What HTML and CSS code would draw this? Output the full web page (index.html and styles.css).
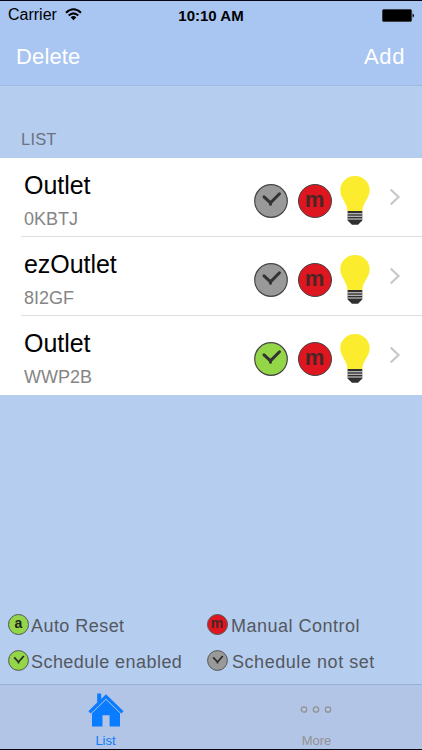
FILE: index.html
```html
<!DOCTYPE html>
<html lang="en">

<head>
    <meta charset="UTF-8">
    <meta name="viewport" content="width=device-width, initial-scale=1.0">
    <title>Outlets</title>
    <link rel="stylesheet" href="styles.css">
</head>

<body>
    <svg class="defs" width="0" height="0">
        <symbol id="clock" viewBox="0 0 34 34">
            <circle cx="17" cy="17" r="16.3" stroke="#444" stroke-width="1.2" />
            <path d="M10 12.800L16.500 18.900L25.500 9.800M16.500 18v2.200" fill="none" stroke="#333" stroke-width="3" stroke-linecap="round" />
        </symbol>
        <symbol id="clock-small" viewBox="0 0 21 21">
            <circle cx="10.500" cy="10.500" r="9.900" stroke="#555" />
            <path d="M6.200 7.300L10.500 12L15.800 6M10.500 11.500v2" fill="none" stroke="#2c2c2c" stroke-width="1.800" />
        </symbol>
        <symbol id="bulb" viewBox="0 0 30 49">
            <path d="M15 0C6.500 0 .3 6.300.3 14.200C.3 22.500 7.300 26.500 7.500 35.200H22.300C22.500 26.500 29.700 22.500 29.700 14.200C29.700 6.300 23.500 0 15 0Z" fill="#fbed2d" />
            <path d="M7.600 35h14.700v9.500l-4.300 4.200h-6l-4.400-4.200z" fill="#303030" />
            <path d="M7.600 37.700h14.700M7.600 40.300h14.700M7.600 43h14.700" stroke="#ddd" stroke-width="1.100" />
        </symbol>
        <symbol id="chevron" viewBox="0 0 12 18">
            <path d="M1.700 1.500L9.500 9L1.700 16.500" fill="none" stroke="#c7c7cc" stroke-width="2.200" />
        </symbol>
    </svg>

    <header class="top">
        <div class="status">
            <span class="carrier">Carrier
                <svg width="17" height="13" viewBox="0 0 17 13">
                    <path d="M1 4.700Q8.500-2.200 16 4.700M3.700 7.600Q8.500 3.200 13.300 7.600" fill="none" stroke="#000" stroke-width="2" />
                    <path d="M5.700 9.200Q8.500 7 11.300 9.200L8.500 12.200Z" />
                </svg>
            </span>
            <span class="time">10:10 AM</span>
            <svg class="battery" width="33" height="13" viewBox="0 0 33 13">
                <rect x=".4" y=".4" width="29.200" height="12.200" rx="1.500" stroke="#333" stroke-width=".8" />
                <path d="M30.600 4.200Q33.400 6.500 30.600 8.800Z" />
            </svg>
        </div>
        <nav class="nav">
            <span>Delete</span>
            <span class="add">Add</span>
        </nav>
    </header>

    <main class="content">
        <h2 class="section-title">LIST</h2>
        <ul class="outlets">
            <li class="outlet">
                <div class="info">
                    <div class="name">Outlet</div>
                    <div class="code">0KBTJ</div>
                </div>
                <svg class="badge off"><use href="#clock" /></svg>
                <span class="badge manual">m</span>
                <svg class="bulb"><use href="#bulb" /></svg>
                <svg class="chevron"><use href="#chevron" /></svg>
            </li>
            <li class="outlet">
                <div class="info">
                    <div class="name">ezOutlet</div>
                    <div class="code">8I2GF</div>
                </div>
                <svg class="badge off"><use href="#clock" /></svg>
                <span class="badge manual">m</span>
                <svg class="bulb"><use href="#bulb" /></svg>
                <svg class="chevron"><use href="#chevron" /></svg>
            </li>
            <li class="outlet">
                <div class="info">
                    <div class="name">Outlet</div>
                    <div class="code">WWP2B</div>
                </div>
                <svg class="badge on"><use href="#clock" /></svg>
                <span class="badge manual">m</span>
                <svg class="bulb"><use href="#bulb" /></svg>
                <svg class="chevron"><use href="#chevron" /></svg>
            </li>
        </ul>

        <div class="legend">
            <div class="legend-item"><span class="icon auto">a</span><span>Auto Reset</span></div>
            <div class="legend-item wide"><span class="icon manual">m</span><span>Manual Control</span></div>
            <div class="legend-item"><svg class="icon on"><use href="#clock-small" /></svg><span>Schedule enabled</span></div>
            <div class="legend-item wider"><svg class="icon off"><use href="#clock-small" /></svg><span>Schedule not set</span></div>
        </div>
    </main>

    <footer class="tabs">
        <div class="tab active">
            <svg width="36" height="34" viewBox="0 0 36 34">
                <path d="M9.200 9.500V.6h4V6L18 1.200L35.500 18.200L33.300 20.500L18 5.700L2.700 20.500L.4 18.200Z" />
                <path d="M18 6.700L32 20.300V33.500H21.600V22.200H14.500V33.500H4V20.300Z" />
            </svg>
            <span>List</span>
        </div>
        <div class="tab">
            <svg width="36" height="34" viewBox="0 0 36 34">
                <g fill="none" stroke="#929292" stroke-width="1.300">
                    <circle cx="5" cy="16.500" r="2.700" />
                    <circle cx="17" cy="16.500" r="2.700" />
                    <circle cx="29" cy="16.500" r="2.700" />
                </g>
            </svg>
            <span>More</span>
        </div>
    </footer>
</body>

</html>
```
FILE: styles.css
```css
* {
    box-sizing: border-box;
}

body {
    margin: 0;
    height: 750px;
    display: flex;
    flex-direction: column;
    font-family: "Liberation Sans", Arial, sans-serif;
    background: #b5cdef;
    border-top: 1px solid #05060f;
    border-bottom: 1px solid #05060f;
    overflow: hidden;
}

svg {
    display: block;
    flex: none;
}

.defs {
    position: absolute;
}

.top {
    height: 85px;
    background: #a9c5f1;
    border-bottom: 1px solid #9fb9e0;
}

.status {
    display: grid;
    grid-template-columns: 1fr auto 1fr;
    align-items: center;
    height: 28px;
    padding: 0 8px;
}

.carrier {
    display: flex;
    align-items: center;
    gap: 8px;
    font-size: 16px;
}

.carrier svg {
    margin-top: -2px;
}

.time {
    font-size: 15px;
    font-weight: bold;
}

.battery {
    justify-self: end;
    margin-right: -1px;
}

.nav {
    display: flex;
    justify-content: space-between;
    padding: 0 17px 0 16px;
    line-height: 56px;
    font-size: 22px;
    letter-spacing: .15px;
    color: #fff;
}

.add {
    letter-spacing: .6px;
}

.content {
    flex: 1;
    display: flex;
    flex-direction: column;
}

.section-title {
    margin: 0;
    padding: 43px 0 0 21px;
    height: 72px;
    font-size: 16.5px;
    font-weight: normal;
    line-height: 20px;
    letter-spacing: .2px;
    color: #6b737f;
}

.outlets {
    margin: 0;
    padding: 0;
    list-style: none;
    background: #fff;
}

.outlet {
    display: flex;
    height: 79px;
    margin-left: 21px;
    padding: 0 21px 0 2px;
    border-bottom: 1px solid #dedee0;
}

.outlet:last-child {
    border-bottom: none;
}

.info {
    flex: 1;
    padding-top: 13px;
}

.name {
    padding-left: 1px;
    font-size: 25px;
    line-height: 28px;
    letter-spacing: -.05px;
}

.code {
    margin-top: 10px;
    padding-left: 1px;
    font-size: 18px;
    line-height: 20px;
    color: #858585;
}

.badge {
    width: 34px;
    height: 34px;
    margin: 26px 10px 0 0;
}

.manual {
    background: #de1620;
    border: 1px solid #444;
    border-radius: 50%;
    color: #4a2526;
    font-size: 22px;
    font-weight: bold;
    line-height: 30px;
    text-align: center;
    text-indent: -1px;
}

.off {
    fill: #999;
}

.on {
    fill: #93d648;
}

.bulb {
    width: 30px;
    height: 49px;
    margin: 18px 19px 0 -2px;
}

.chevron {
    width: 12px;
    height: 18px;
    margin-top: 30px;
}

.legend {
    display: grid;
    grid-template-columns: 199px 1fr;
    row-gap: 14px;
    margin-top: auto;
    padding: 0 0 12px 8px;
}

.legend-item {
    display: flex;
    gap: 2px;
    height: 22px;
    font-size: 18px;
    line-height: 24px;
    letter-spacing: .45px;
    color: #54585f;
}

.legend-item.wide {
    gap: 3px;
    letter-spacing: .5px;
}

.legend-item.wider {
    gap: 4px;
    letter-spacing: .55px;
}

.icon {
    width: 21px;
    height: 21px;
    flex: none;
    letter-spacing: 0;
}

span.icon {
    border: 1px solid #555;
    border-radius: 50%;
    font-size: 14px;
    font-weight: bold;
    line-height: 17px;
    text-align: center;
}

.auto {
    background: #93d648;
    color: #222;
}

.icon.manual {
    color: #4a2526;
}

.tabs {
    display: flex;
    height: 65px;
    background: #b2c5e6;
    border-top: 1px solid #9cafd2;
}

.tab {
    flex: 1;
    display: flex;
    flex-direction: column;
    align-items: center;
    padding-top: 8px;
    font-size: 13px;
    line-height: 16px;
    color: #929292;
}

.tab span {
    margin-top: 6px;
}

.tab.active {
    color: #0a7cff;
    fill: #0a7cff;
}
```
